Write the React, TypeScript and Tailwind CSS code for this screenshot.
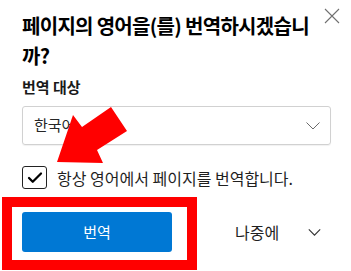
import { Check } from 'lucide-react';

const font = { fontFamily: '"Noto Sans CJK KR", "Noto Sans", sans-serif' };

export default function App() {
  return (
    <div className="relative w-[351px] h-[271px] overflow-hidden bg-white text-[#1a1a1a]" style={font}>
      <div className="flex flex-col pl-[22px] pr-[11px]">
        {/* Header */}
        <div className="flex justify-between pt-[11px]">
          <h1 className="whitespace-nowrap text-[20px] font-bold leading-[30px] tracking-[-0.7px] text-black">
            페이지의 영어을(를) 번역하시겠습니
            <br />
            까?
          </h1>
          <button type="button" className="shrink-0 mt-[-3px] w-[16px] h-[16px] text-[#707070]" aria-label="닫기">
            <svg viewBox="0 0 16 16" className="w-[16px] h-[16px]" fill="none" stroke="currentColor" strokeWidth="1.1">
              <path d="M1 1 L15 15 M15 1 L1 15" />
            </svg>
          </button>
        </div>

        {/* Target language */}
        <div className="mt-[6px] text-[15px] font-semibold leading-[20px]">번역 대상</div>
        <div className="mt-[9px] w-[309px] h-[39px] flex items-center justify-between border border-[#d1d1d1] rounded-[3px] pl-[11px] pr-[10px] shadow-[0_1px_1px_rgba(0,0,0,0.06)]">
          <span className="text-[15px] text-[#262626]">한국어</span>
          <svg viewBox="0 0 14 8" className="w-[14px] h-[8px]" fill="none" stroke="#6b6b6b" strokeWidth="1">
            <path d="M0.5 0.5 L7 7 L13.5 0.5" />
          </svg>
        </div>

        {/* Checkbox */}
        <div className="mt-[21px] flex items-center gap-[10px]">
          <div className="w-[25px] h-[23px] rounded-[3px] border-[1.5px] border-[#222] flex items-center justify-center">
            <Check size={18} strokeWidth={3} className="text-black" />
          </div>
          <span className="text-[16px] leading-[20px] text-[#1f1f1f]">항상 영어에서 페이지를 번역합니다.</span>
        </div>

        {/* Actions */}
        <div className="mt-[23px] flex items-center">
          <button type="button" className="w-[150px] h-[40px] rounded-[3px] bg-[#0078d4] text-white text-[15px]">
            번역
          </button>
          <button type="button" className="ml-[63px] text-[16px] text-[#1f1f1f]">
            나중에
          </button>
          <svg viewBox="0 0 14 8" className="ml-[29px] w-[13px] h-[7px]" fill="none" stroke="#333" strokeWidth="1.3">
            <path d="M0.5 0.5 L7 7 L13.5 0.5" />
          </svg>
        </div>
      </div>

      {/* Annotation overlays */}
      <div className="absolute left-[2px] top-[197px] w-[195px] h-[73px] border-[10px] border-[#ff0000]" />
      <svg className="absolute left-0 top-0 w-[351px] h-[271px] pointer-events-none" viewBox="0 0 351 271">
        <polygon points="57,162 73,115 82,127 111,107 127,131 97,150 103,163" fill="#ff0000" />
      </svg>
    </div>
  );
}
